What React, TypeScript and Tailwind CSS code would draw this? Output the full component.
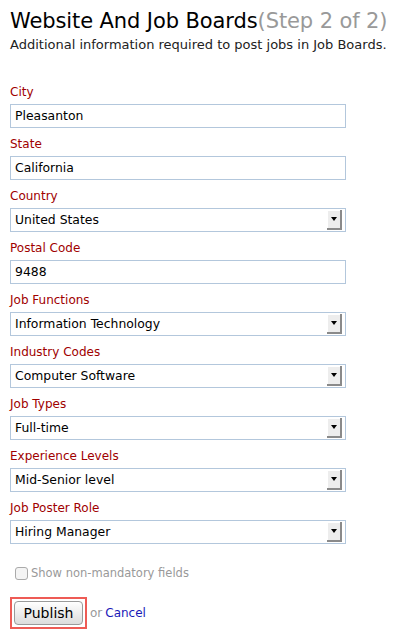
import type { ReactNode } from "react";

const fields: { label: string; value: string; select?: boolean }[] = [
  { label: "City", value: "Pleasanton" },
  { label: "State", value: "California" },
  { label: "Country", value: "United States", select: true },
  { label: "Postal Code", value: "9488" },
  { label: "Job Functions", value: "Information Technology", select: true },
  { label: "Industry Codes", value: "Computer Software", select: true },
  { label: "Job Types", value: "Full-time", select: true },
  { label: "Experience Levels", value: "Mid-Senior level", select: true },
  { label: "Job Poster Role", value: "Hiring Manager", select: true },
];

function Arrow() {
  return (
    <span className="flex h-[20px] w-[15px] items-center justify-center border-r-2 border-b-2 border-[#8a8a8a] bg-[#ededed] shadow-[inset_1px_1px_0_#fff]">
      <span className="h-0 w-0 border-x-[3.5px] border-t-[4px] border-x-transparent border-t-black" />
    </span>
  );
}

function Field({ label, value, select }: { label: string; value: string; select?: boolean }): ReactNode {
  return (
    <div className="mb-[7px]">
      <div className="h-[18px] leading-[18px] text-[12px] text-[#a00000]">{label}</div>
      <div className="mt-[3px] flex h-[24px] w-[336px] items-center justify-between border border-[#b3c7dc] bg-white pl-[4px] pr-[3px]">
        <span className="text-[12.4px] text-black">{value}</span>
        {select && <Arrow />}
      </div>
    </div>
  );
}

export default function App() {
  return (
    <div className="min-h-screen bg-white px-[10px] pt-[7px] font-['DejaVu_Sans',Verdana,sans-serif]">
      <h1 className="whitespace-nowrap text-[21px] leading-[28px] tracking-[-0.1px] text-black">
        Website And Job Boards<span className="text-[#999]">(Step 2 of 2)</span>
      </h1>
      <p className="mt-[1px] whitespace-nowrap text-[13px] leading-[18px] text-[#222]">
        Additional information required to post jobs in Job Boards.
      </p>

      <div className="mt-[29px]">
        {fields.map((f) => (
          <Field key={f.label} {...f} />
        ))}
      </div>

      <label className="mt-[21px] flex items-center gap-[3px] pl-[5px] text-[11.5px] text-[#999]">
        <span className="h-[13px] w-[13px] rounded-[3px] border border-[#aaa] bg-[#f4f4f4]" />
        Show non-mandatory fields
      </label>

      <div className="mt-[15px] flex items-center gap-[3px]">
        <div className="border-2 border-[#ee5b55] p-[2px]">
          <button className="block h-[24px] w-[69px] rounded-[4px] border border-[#9a9a9a] bg-gradient-to-b from-white to-[#dcdcdc] text-[14px] leading-none text-black">
            Publish
          </button>
        </div>
        <span className="text-[12px] text-[#999]">or</span>
        <a className="text-[12px] text-[#1a1ab8]">Cancel</a>
      </div>
    </div>
  );
}
